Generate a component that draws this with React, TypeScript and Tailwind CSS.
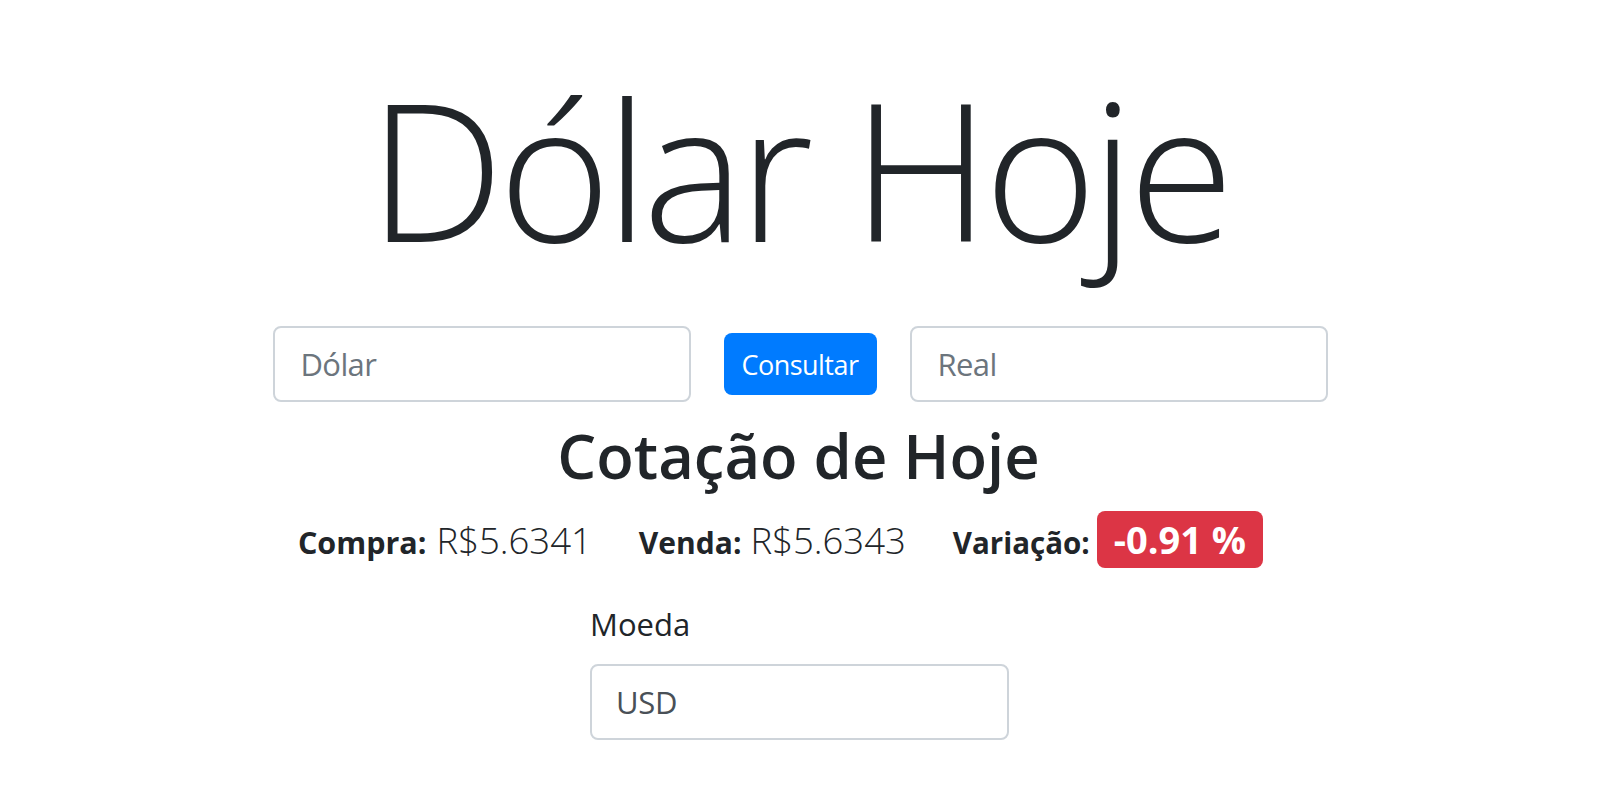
import React from "react";

export default function App() {
  return (
    <div
      className="min-h-screen w-full bg-white flex flex-col items-center text-[#212529]"
      style={{ fontFamily: '"Open Sans", "Noto Sans", sans-serif' }}
    >
      <h1 className="mt-[53px] text-[192px] leading-[230px] font-light tracking-[-0.03em] whitespace-nowrap">
        Dólar Hoje
      </h1>

      <div className="mt-[43px] flex items-center gap-[33px] pl-[3px]">
        <input
          type="text"
          placeholder="Dólar"
          className="w-[418px] h-[76px] rounded-[8px] border-2 border-[#ced4da] bg-white px-[26px] text-[31px] tracking-[-0.02em] text-[#495057] placeholder:text-[#6c757d] outline-none"
        />
        <button className="w-[153px] h-[62px] rounded-[8px] bg-[#007bff] text-white text-[27px] tracking-[-0.02em] leading-none flex items-center justify-center">
          Consultar
        </button>
        <input
          type="text"
          placeholder="Real"
          className="w-[418px] h-[76px] rounded-[8px] border-2 border-[#ced4da] bg-white px-[26px] text-[31px] tracking-[-0.02em] text-[#495057] placeholder:text-[#6c757d] outline-none"
        />
      </div>

      <h2 className="mt-[17px] text-[61.5px] leading-[72px] font-semibold">
        Cotação de Hoje
      </h2>

      <div className="mt-[20px] flex items-baseline gap-[47px] pr-[36px]">
        <div className="flex items-baseline gap-[10px]">
          <span className="text-[30.5px] font-bold">Compra:</span>
          <span className="text-[36.5px] font-light">R$5.6341</span>
        </div>
        <div className="flex items-baseline gap-[9px]">
          <span className="text-[30px] font-bold">Venda:</span>
          <span className="text-[36.5px] font-light">R$5.6343</span>
        </div>
        <div className="flex items-baseline gap-[7px]">
          <span className="text-[29.5px] font-bold">Variação:</span>
          <span className="inline-block rounded-[8px] bg-[#dc3545] px-[17px] text-[38px] leading-[57px] font-bold text-white">
            -0.91 %
          </span>
        </div>
      </div>

      <div className="mt-[32px] w-[419px] ml-[2px] flex flex-col">
        <label className="text-[31px] leading-[48px] mb-[16px]">Moeda</label>
        <input
          type="text"
          defaultValue="USD"
          className="w-full h-[76px] rounded-[8px] border-2 border-[#ced4da] bg-white px-[24px] text-[31px] tracking-[-0.01em] text-[#495057] outline-none"
        />
      </div>
    </div>
  );
}
